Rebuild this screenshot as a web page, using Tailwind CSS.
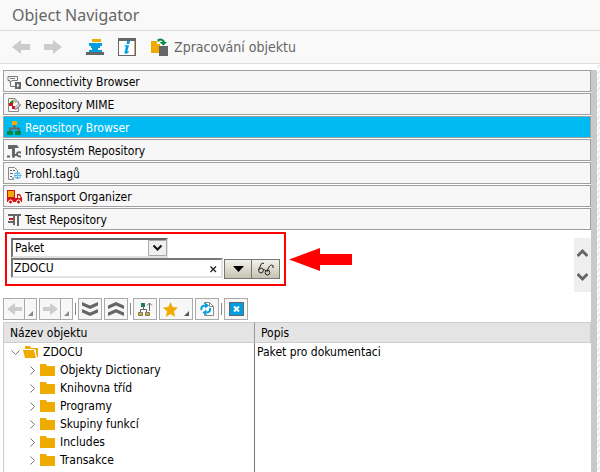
<!DOCTYPE html>
<html lang="cs">
<head>
<meta charset="utf-8">
<meta name="viewport" content="width=device-width, initial-scale=1">
<title>Object Navigator</title>
<script src="https://cdn.jsdelivr.net/npm/@tailwindcss/browser@4"></script>
</head>
<body class="flex min-h-screen flex-col bg-white font-['DejaVu_Sans_Condensed','Noto_Sans',sans-serif] text-xs text-black">
<header class="border-b border-[#dedede] bg-[#f9f9f9] px-3">
  <h1 class="h-[30px] font-['Noto_Sans',sans-serif] text-base leading-[31px] text-[#666]">Object Navigator</h1>
</header>
<nav aria-label="Aplikace" class="flex h-[33px] shrink-0 items-center border-b border-[#dedede] bg-[#f9f9f9] pl-3">
  <button aria-label="Zpět" class="mr-[14px]"><svg class="block" width="18" height="16" viewBox="0 0 18 16"><path d="M0 8 9 1V5H18V11H9V15Z" fill="#ccc"/></svg></button>
  <button aria-label="Vpřed" class="mr-6"><svg class="block" width="18" height="16" viewBox="0 0 18 16"><path d="M18 8 9 1V5H0V11H9V15Z" fill="#ccc"/></svg></button>
  <button aria-label="Zásobník objektů" class="mr-[14px]"><svg class="block" width="18" height="18" viewBox="0 0 18 18"><path d="M6 1H15V4H6Z" fill="#f0ab00"/><path d="M3 5H16V8H3ZM5 8H14V10H5ZM6 10H12V12H6ZM3 12H16V14H3Z" fill="#009de0"/><path d="M0 14H18V17H0Z" fill="#666"/></svg></button>
  <button aria-label="Informace" class="mr-[15px]"><svg class="block" width="18" height="18" viewBox="0 0 18 18"><path d="M0 0H18V18H0Z" fill="#666"/><path d="M1 3H17V17H1Z" fill="#fff"/><path d="M16.500 3V17" stroke="#d8a070"/><path d="M9 3H12L11.4 6H8.6ZM6.7 7.3H11L9.3 13.5 11 13 10.6 14.4Q8.6 16 6.8 15.6 6.2 15.4 6.5 14L8 8.6H6.4Z" fill="#009de0"/></svg></button>
  <button class="flex items-center gap-[6px] text-[14px] text-[#666]"><svg width="17" height="18" viewBox="0 0 17 18"><path d="M0 3H6V6H9V15H0Z" fill="#f0ab00"/><path d="M8 8H17V18H8Z" fill="#666"/><path d="M7.5 3.5V2Q10 .5 12.5 3V5" fill="none" stroke="#008a3b" stroke-width="2"/><path d="M8.5 4H16L12.5 7.5Z" fill="#008a3b"/></svg>Zpracování objektu</button>
</nav>

<div class="flex flex-1">
<main class="flex min-w-0 flex-1 flex-col pl-[3px] pt-[6px]">
  <div class="flex flex-col gap-px">
    <button class="flex h-[22px] items-center gap-[3px] border border-[#a0a0a0] bg-[#f7f7f7] pl-[3px] pt-[2px] text-left"><svg width="15" height="16" viewBox="0 0 15 16"><path d="M1 2.5H10.5V6.5H5L3 9V6.5H1ZM3 4.5H8M3.5 9V12.5H8" fill="none" stroke="#777"/><path d="M8 8H14V15H8Z" fill="#666"/><path d="M10 9.5 12.5 11.5 10 13.5Z" fill="#fff"/></svg>Connectivity Browser</button>
    <button class="flex h-[22px] items-center gap-[3px] border border-[#a0a0a0] bg-[#f7f7f7] pl-[3px] pt-[2px] text-left"><svg width="15" height="16" viewBox="0 0 15 16"><path d="M1.5 1.5H8L11.5 5V14.5H1.5ZM8 1.5V5H11.5" fill="#fff" stroke="#888"/><path d="M3 5 6 3V7H3Z" fill="#008a3b"/><path d="M2 6H6V9H2ZM5 9H8V12H5Z" fill="#d51317"/><path d="M6.5 2.5V6.5" stroke="#f0ab00"/><path d="M7 13 8 10 12 6 14.5 8 10 12.5Z" fill="#999"/><path d="M8.5 11 12 7.5" stroke="#fff"/></svg>Repository MIME</button>
    <button aria-current="true" class="flex h-[22px] items-center gap-[3px] border border-[#a0a0a0] bg-[#00bbf2] pl-[3px] pt-[2px] text-left text-white"><svg width="15" height="16" viewBox="0 0 15 16"><path d="M5 1H10V5H5Z" fill="#f0ab00"/><path d="M7.5 5V8M3 12V8.500H12V12" fill="none" stroke="#666" stroke-width="2"/><path d="M0 11H6V15H0ZM8 11H14V15H8Z" fill="#008a3b"/></svg>Repository Browser</button>
    <button class="flex h-[22px] items-center gap-[3px] border border-[#a0a0a0] bg-[#f7f7f7] pl-[3px] pt-[2px] text-left"><svg width="15" height="16" viewBox="0 0 15 16"><path d="M1 2H10L12 5H8V13Q8 15 6.500 15T5 13V6H1Z" fill="#666"/><path d="M14 9.500Q10 8.500 10 11T14 13.500M10 12H5M3 13.500H0" fill="none" stroke="#666" stroke-width="2"/></svg>Infosystém Repository</button>
    <button class="flex h-[22px] items-center gap-[3px] border border-[#a0a0a0] bg-[#f7f7f7] pl-[3px] pt-[2px] text-left"><svg width="15" height="16" viewBox="0 0 15 16"><path d="M1.500 13.500V1.500H7.500L10.500 4.500V6M1.500 13.500H7" fill="none" stroke="#888"/><path d="M3 4.500H5M6 4.500H8M3 7.500H6M3 10.500H5M5 12H7" stroke="#666"/><circle cx="10.500" cy="9.500" r="3" fill="#fff" stroke="#5ab9e6"/><path d="M7 9.500H14.500M10.500 6V13M8 7.500H13M8 11.500H13" stroke="#5ab9e6"/></svg>Prohl.tagů</button>
    <button class="flex h-[22px] items-center gap-[3px] border border-[#a0a0a0] bg-[#f7f7f7] pl-[3px] pt-[2px] text-left"><svg width="15" height="16" viewBox="0 0 15 16"><path d="M0 1H8V9H10V5H13L15 9V13H0Z" fill="#d51317"/><path d="M1 2H7V8H1Z" fill="#f0ab00"/><path d="M11 6.5H12.5L13.5 9H11Z" fill="#fff"/><circle cx="3.5" cy="13" r="2" fill="#d51317" stroke="#fff"/><circle cx="11.5" cy="13" r="2" fill="#d51317" stroke="#fff"/></svg>Transport Organizer</button>
    <button class="flex h-[22px] items-center gap-[3px] border border-[#a0a0a0] bg-[#f7f7f7] pl-[3px] pt-[2px] text-left"><svg width="15" height="16" viewBox="0 0 15 16"><path d="M1 2H14V4H12V14H10V4H8V13H6V11H1V9H6V4H1Z" fill="#666"/><path d="M2 6H6V8H2Z" fill="#d51317"/></svg>Test Repository</button>
  </div>

  <div class="flex items-start justify-between pt-2">
    <div class="-mt-[6px] ml-[2px] flex items-center gap-[3px]">
      <form class="w-[281px] border-2 border-[#f00] p-1 pb-[5px]">
        <div class="relative w-[157px]">
          <select aria-label="Typ objektu" class="block h-5 w-full appearance-none border-2 border-t-[#666] border-l-[#777] border-r-[#e2e2e2] border-b-[#e2e2e2] bg-white pl-[2px]"><option>Paket</option></select>
          <svg class="pointer-events-none absolute right-px top-[2px]" width="19" height="16" viewBox="0 0 19 16"><path d="M.5 .5H18.5V15.5H.5Z" fill="#efefef" stroke="#aaa"/><path d="M5.5 5.5 9.5 9.5 13.5 5.5" fill="none" stroke="#111" stroke-width="2"/></svg>
        </div>
        <div class="flex items-start">
          <div class="relative mr-px min-w-0 flex-1">
            <input aria-label="Název objektu" value="ZDOCU" class="block h-5 w-full border-2 border-t-[#777] border-l-[#777] border-r-[#e2e2e2] border-b-[#e2e2e2] bg-white pl-px">
            <button type="button" aria-label="Vymazat" class="absolute right-[6px] top-2"><svg class="block" width="7" height="7" viewBox="0 0 7 7"><path d="M.5 .5 6 6M6 .5 .5 6" stroke="#222" stroke-width="1.300"/></svg></button>
          </div>
          <button type="button" aria-label="Seznam" class="mt-px flex h-5 w-7 items-center justify-center border border-[#777] bg-linear-to-b from-[#f3f2ea] to-[#c4c4b2]"><svg width="11" height="6" viewBox="0 0 11 6"><path d="M0 0H11L5.5 6Z"/></svg></button>
          <button type="button" aria-label="Zobrazit" class="mt-px flex h-5 w-7 items-center justify-center border border-l-0 border-[#777] bg-linear-to-b from-[#f3f2ea] to-[#c4c4b2]"><svg width="18" height="14" viewBox="0 0 18 14"><path d="M7 2Q6 0 4.500 1.500L1.500 8M10 10Q12 3 14.500 3Q17 3 16 6M6 8Q7.500 7 9 9" fill="none" stroke="#222"/><ellipse cx="4" cy="8.500" rx="2.300" ry="2.500" fill="none" stroke="#222"/><ellipse cx="10.500" cy="10.500" rx="2.300" ry="2.500" fill="none" stroke="#222"/></svg></button>
        </div>
      </form>
      <svg width="64" height="23" viewBox="0 0 64 23"><path d="M0 11.500 31 0V6H63V17H31V23Z" fill="#f00"/></svg>
    </div>
    <div class="flex h-[54px] w-[17px] flex-col items-center justify-between bg-[#efefef] py-[10px]">
      <button aria-label="Nahoru"><svg class="block" width="11" height="10" viewBox="0 0 11 10"><path d="M.5 8 5.500 3 10.500 8" fill="none" stroke="#666" stroke-width="3"/></svg></button>
      <button aria-label="Dolů"><svg class="block" width="11" height="10" viewBox="0 0 11 10"><path d="M.5 2 5.500 7 10.500 2" fill="none" stroke="#666" stroke-width="3"/></svg></button>
    </div>
  </div>

  <div role="toolbar" class="mt-[6px] mb-[2px] flex h-[22px] items-center gap-[2px]">
    <div class="flex h-full border border-[#aaa] bg-[#f7f7f7]">
      <button aria-label="Předchozí" class="flex w-[21px] items-center justify-center border-r border-[#aaa]"><svg width="15" height="12" viewBox="0 0 15 12"><path d="M0 6 8 0V4H15V8H8V12Z" fill="#ccc"/></svg></button>
      <button aria-label="Historie zpět" class="flex w-[11px] items-end justify-center pb-[3px]"><svg width="5" height="5" viewBox="0 0 5 5"><path d="M5 0V5H0Z" fill="#888"/></svg></button>
    </div>
    <div class="flex h-full border border-[#aaa] bg-[#f7f7f7]">
      <button aria-label="Další" class="flex w-[21px] items-center justify-center border-r border-[#aaa]"><svg width="15" height="12" viewBox="0 0 15 12"><path d="M15 6 7 0V4H0V8H7V12Z" fill="#ccc"/></svg></button>
      <button aria-label="Historie vpřed" class="flex w-[11px] items-end justify-center pb-[3px]"><svg width="5" height="5" viewBox="0 0 5 5"><path d="M5 0V5H0Z" fill="#888"/></svg></button>
    </div>
    <span class="h-3 w-px bg-[#888]"></span>
    <button aria-label="Rozbalit vše" class="flex h-full w-6 items-center justify-center border border-[#aaa] bg-[#f7f7f7]"><svg width="16" height="14" viewBox="0 0 16 14"><path d="M0 0 8 3.500 16 0V3.500L8 7 0 3.500ZM0 7 8 10.500 16 7V10.500L8 14 0 10.500Z" fill="#666"/></svg></button>
    <button aria-label="Sbalit vše" class="flex h-full w-6 items-center justify-center border border-[#aaa] bg-[#f7f7f7]"><svg width="16" height="14" viewBox="0 0 16 14"><path d="M0 7 8 3.500 16 7V3.500L8 0 0 3.500ZM0 14 8 10.500 16 14V10.500L8 7 0 10.500Z" fill="#666"/></svg></button>
    <span class="h-3 w-px bg-[#888]"></span>
    <button aria-label="Nadřazený objekt" class="flex h-full w-6 items-center justify-center border border-[#aaa] bg-[#f7f7f7]"><svg width="16" height="16" viewBox="0 0 16 16"><path d="M6.500 5V8M3.500 12V8.500H9.500V12M12.500 10V3M10 4.500 12.500 2 15 4.500" fill="none" stroke="#666"/><path d="M4 2H8V6H4Z" fill="#247a55"/><path d="M1.500 11.500H5.500V14.500H1.500ZM8.500 11.500H12.500V14.500H8.500Z" fill="#f0ab00" stroke="#777"/></svg></button>
    <button aria-label="Oblíbené" class="flex h-full w-[34px] items-center gap-[6px] border border-[#aaa] bg-[#f7f7f7] pl-[3px]"><svg width="15" height="15" viewBox="0 0 15 15"><path d="M7.500 0 9.700 5 15 5.500 11 9.200 12.200 15 7.500 12 2.800 15 4 9.200 0 5.500 5.300 5Z" fill="#f0ab00"/></svg><svg class="mb-[3px] self-end" width="5" height="5" viewBox="0 0 5 5"><path d="M5 0V5H0Z" fill="#555"/></svg></button>
    <button aria-label="Aktualizovat" class="flex h-full w-6 items-center justify-center border border-[#aaa] bg-[#f7f7f7]"><svg width="16" height="16" viewBox="0 0 16 16"><path d="M5.500 3V1.500H10.500L14.500 5.500V14.500H5.500V13M10.500 1.500V5.500H14.500" fill="#fff" stroke="#888"/><path d="M2.500 9Q1.500 5 6 4.500M11 7Q12 11 7.500 11.500" fill="none" stroke="#009de0" stroke-width="2"/><path d="M6 1.500 10 4.500 6 7.500ZM7.500 8.500 3.500 11.500 7.500 14.500Z" fill="#009de0"/></svg></button>
    <span class="h-3 w-px bg-[#888]"></span>
    <button aria-label="Zavřít" class="flex h-full w-6 items-center justify-center border border-[#aaa] bg-[#f7f7f7]"><svg width="15" height="14" viewBox="0 0 15 14"><path d="M0 0H15V14H0Z" fill="#666"/><path d="M1 1H14V13H1Z" fill="#009de0"/><path d="M5 4.500 10 9.500M10 4.500 5 9.500" stroke="#fff" stroke-width="2"/></svg></button>
  </div>

  <div class="grid flex-1">
  <table class="h-full w-full table-fixed border-separate border-spacing-0 border-l border-[#ccc] text-left">
    <colgroup><col class="w-[251px]"><col></colgroup>
    <thead>
      <tr class="h-[21px] bg-[#e4e4e4]">
        <th class="border-y border-r border-y-[#ccc] border-r-[#999] p-0 pl-[6px] font-normal leading-4">Název objektu</th>
        <th class="border-y border-r border-[#ccc] p-0 pl-[6px] font-normal leading-4">Popis</th>
      </tr>
    </thead>
    <tbody>
      <tr class="h-[18px]"><td class="border-r border-[#777] p-0"><div class="flex items-center pl-[7px] leading-[18px]"><svg class="mr-[3px]" width="9" height="9" viewBox="0 0 9 9"><path d="M.5 2.500 4.500 6.500 8.500 2.500" fill="none" stroke="#777"/></svg><svg class="mr-[5px]" width="15" height="12" viewBox="0 0 15 12"><path d="M2 0H7L8 2H15V11H13V4H2Z" fill="#f0ab00"/><path d="M0 4H11L13 12H2Z" fill="#f0ab00"/><path d="M2 3.500H11.500L13.500 11" fill="none" stroke="#fff"/></svg>ZDOCU</div></td><td class="p-0 pl-[2px] leading-[18px]">Paket pro dokumentaci</td></tr>
      <tr class="h-[18px]"><td class="border-r border-[#777] p-0"><div class="flex items-center pl-6 leading-[18px]"><svg class="mr-[3px]" width="9" height="9" viewBox="0 0 9 9"><path d="M2.500 .5 6.500 4.500 2.500 8.500" fill="none" stroke="#777"/></svg><svg class="mr-[5px]" width="15" height="12" viewBox="0 0 15 12"><path d="M0 0H6L7 2H15V12H0Z" fill="#f0ab00"/></svg>Objekty Dictionary</div></td><td></td></tr>
      <tr class="h-[18px]"><td class="border-r border-[#777] p-0"><div class="flex items-center pl-6 leading-[18px]"><svg class="mr-[3px]" width="9" height="9" viewBox="0 0 9 9"><path d="M2.500 .5 6.500 4.500 2.500 8.500" fill="none" stroke="#777"/></svg><svg class="mr-[5px]" width="15" height="12" viewBox="0 0 15 12"><path d="M0 0H6L7 2H15V12H0Z" fill="#f0ab00"/></svg>Knihovna tříd</div></td><td></td></tr>
      <tr class="h-[18px]"><td class="border-r border-[#777] p-0"><div class="flex items-center pl-6 leading-[18px]"><svg class="mr-[3px]" width="9" height="9" viewBox="0 0 9 9"><path d="M2.500 .5 6.500 4.500 2.500 8.500" fill="none" stroke="#777"/></svg><svg class="mr-[5px]" width="15" height="12" viewBox="0 0 15 12"><path d="M0 0H6L7 2H15V12H0Z" fill="#f0ab00"/></svg>Programy</div></td><td></td></tr>
      <tr class="h-[18px]"><td class="border-r border-[#777] p-0"><div class="flex items-center pl-6 leading-[18px]"><svg class="mr-[3px]" width="9" height="9" viewBox="0 0 9 9"><path d="M2.500 .5 6.500 4.500 2.500 8.500" fill="none" stroke="#777"/></svg><svg class="mr-[5px]" width="15" height="12" viewBox="0 0 15 12"><path d="M0 0H6L7 2H15V12H0Z" fill="#f0ab00"/></svg>Skupiny funkcí</div></td><td></td></tr>
      <tr class="h-[18px]"><td class="border-r border-[#777] p-0"><div class="flex items-center pl-6 leading-[18px]"><svg class="mr-[3px]" width="9" height="9" viewBox="0 0 9 9"><path d="M2.500 .5 6.500 4.500 2.500 8.500" fill="none" stroke="#777"/></svg><svg class="mr-[5px]" width="15" height="12" viewBox="0 0 15 12"><path d="M0 0H6L7 2H15V12H0Z" fill="#f0ab00"/></svg>Includes</div></td><td></td></tr>
      <tr class="h-[18px]"><td class="border-r border-[#777] p-0"><div class="flex items-center pl-6 leading-[18px]"><svg class="mr-[3px]" width="9" height="9" viewBox="0 0 9 9"><path d="M2.500 .5 6.500 4.500 2.500 8.500" fill="none" stroke="#777"/></svg><svg class="mr-[5px]" width="15" height="12" viewBox="0 0 15 12"><path d="M0 0H6L7 2H15V12H0Z" fill="#f0ab00"/></svg>Transakce</div></td><td></td></tr>
      <tr><td class="border-r border-[#777] p-0"></td><td class="p-0"></td></tr>
    </tbody>
  </table>
  </div>
</main>
<div class="mt-[6px] w-[6px] bg-[#c9c9c9]"></div>
<div class="w-[3px] bg-[repeating-linear-gradient(135deg,#fff_0px,#fff_2px,#e6f0f7_2px,#e6f0f7_4px)]"></div>
</div>
</body>
</html>
